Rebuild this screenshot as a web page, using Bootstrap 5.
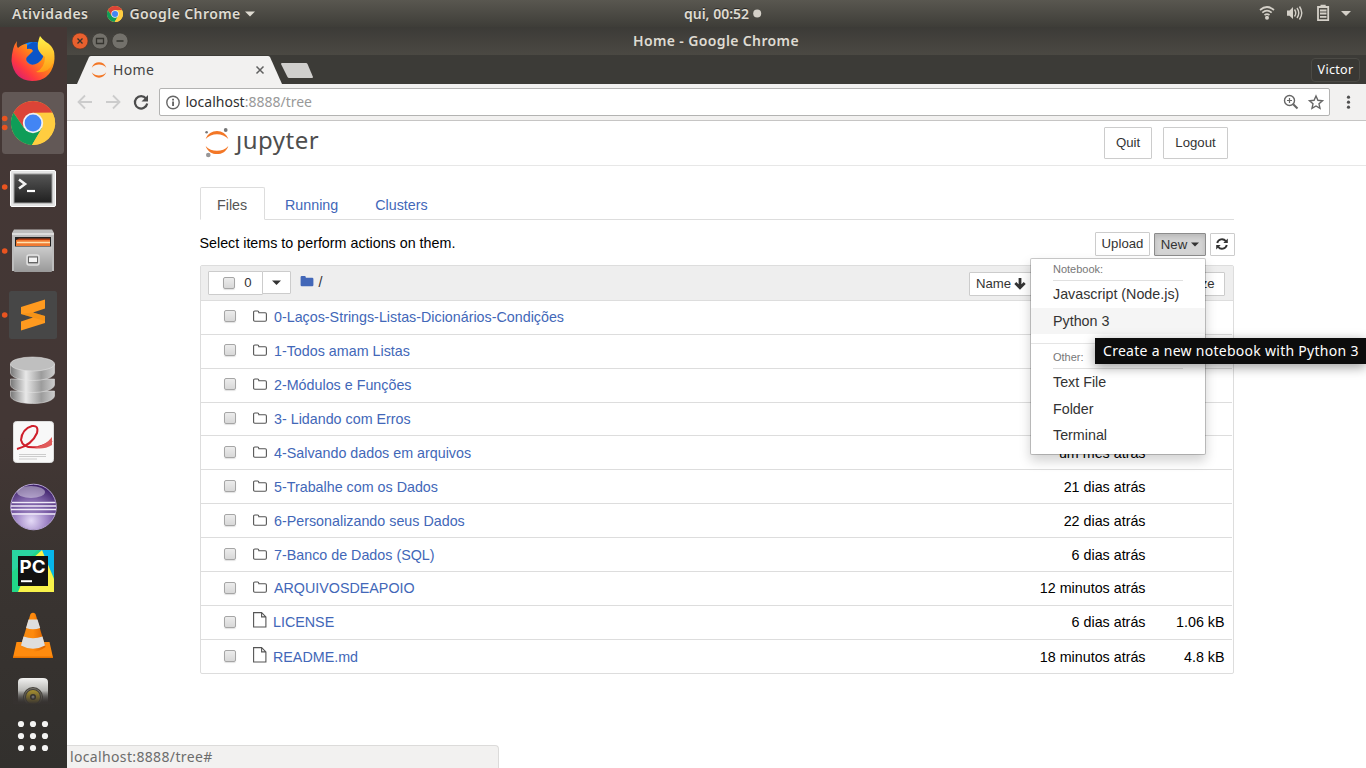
<!DOCTYPE html>
<html lang="pt-BR">
<head>
<meta charset="utf-8">
<title>Home</title>
<link href="https://cdn.jsdelivr.net/npm/bootstrap@5.3.0/dist/css/bootstrap.min.css" rel="stylesheet">
<style>
body{width:1366px;height:768px;overflow:hidden;font:14.3px/20px "Liberation Sans",sans-serif;color:#000;background:#fff}
svg{display:block;flex:none}
.ubu{font-family:"Noto Sans","Open Sans",sans-serif;white-space:nowrap}
.panel{height:27px;background:linear-gradient(#595750,#3e3d38);color:#dfdbd2;font-size:14px;font-weight:600;text-shadow:0 -1px 0 #2c2b28}
.panel>*{flex:1 1 0}
.t-act{letter-spacing:.5px}
.t-chr{letter-spacing:.4px}
.t-ttl{letter-spacing:.37px}
.t-usr{letter-spacing:.3px}
.t-tip{letter-spacing:.28px}
.t-sta{letter-spacing:.35px}
.clock{flex:none;padding-left:68px}
.dock{width:67px;background:linear-gradient(#443735,#433735 55%,#3a3431 72%,#32302d);flex:none}
.titlebar{height:28px;background:linear-gradient(#3c3b37,#4b4943);color:#dfdbd2;font-size:14px;font-weight:600;padding-left:5px}
.titletext{padding-left:503px}
.tabstrip{height:29px;background:#3c3b37}
.userbtn{width:49px;height:24px;border:1px solid #4b4a45;border-radius:4px;color:#fff;font-size:12.5px;background:#393834;margin:3px 6px 0 0}
.toolbar{height:37px;background:#f2f1f0;border-bottom:1px solid #c6c5c4;padding-left:10px}
.address{width:1171px;height:28px;border:1px solid #b3b3b2;border-radius:2px;background:#fff;font-size:14px;color:#999;padding:0 4px 0 6px}
.address b{font-weight:400;color:#303030}
.wrap{width:1034px;margin-left:133px}
.jhead{height:45px;border-bottom:1px solid #e7e7e7}
.jlogo{font-size:24px;line-height:30px;color:#4e4e4e;letter-spacing:.5px;margin:4px 0 0 4px}
.stem{display:inline-block;clip-path:inset(9.5px -3px -3px -6px)}
.btn-j{border:1px solid #ccc;border-radius:1px;background:#fff;color:#333;font-size:13.2px;line-height:1;padding:0;display:flex;align-items:center;justify-content:center}
.btn-j.dropdown-toggle::after{content:none}
.btn-new{background:#d4d4d4;border-color:#8c8c8c;box-shadow:inset 0 3px 5px rgba(0,0,0,.125)}
.jtabs{border-bottom:1px solid #ddd;height:33px;--bs-nav-tabs-border-width:1px}
.jtabs .nav-link{height:33px;padding:0 16px;border-radius:2px 2px 0 0;color:#4267b8;line-height:35px;border:1px solid transparent;margin-bottom:-1px}
.jtabs .nav-link.active{border-color:#ddd #ddd #fff;color:#555;width:65px}
.filebox{border:1px solid #ddd;border-radius:2px}
.filehead{height:34.85px;background:#eee;border-bottom:1px solid #ddd}
.filerow{height:33.9px;flex:none;border:0;border-bottom:1px solid #ddd;padding:0 7.5px 0 23px;margin-right:1px;background:transparent;color:#000}
.filerow:last-child{border-bottom-color:transparent}
.filerow a{color:#4267b8;text-decoration:none}
.cbx{width:12px;height:12px;border:1px solid #a6a6a6;border-radius:2px;background:linear-gradient(#ececec,#d8d8d8);box-shadow:0 1px 1px rgba(0,0,0,.12);flex:none}
.filerow .cbx{margin-bottom:1.6px}
.fsize{width:79px;text-align:right}
.newmenu{display:block;position:absolute;left:963px;top:137px;width:176px;height:197px;min-width:0;padding:0;border:1px solid rgba(0,0,0,.2);border-radius:2px;background:#fff;background-clip:padding-box;box-shadow:0 6px 12px rgba(0,0,0,.175);font-size:14.3px;z-index:5}
.newmenu .dropdown-header{font-size:11px;line-height:20px;height:22px;padding:0;margin:0 22px;color:#777;border-bottom:1px solid #e0e0e0}
.newmenu .dropdown-item{height:26.6px;line-height:26.4px;padding:0 0 0 22px;color:#333}
.newmenu .hov{background:#f5f5f5}
.rule{border-top:1px solid #e5e5e5;margin:9px 0 3px}
.tip{position:absolute;left:1028px;top:217px;width:271px;height:26px;background:#0c0c0c;color:#fff;font-size:14px;line-height:26px;box-shadow:0 3px 12px rgba(0,0,0,.4);z-index:6;padding-left:8px}
.status{position:absolute;left:0;bottom:0;width:432px;height:23px;background:#f2f1f0;border:1px solid #dcdbda;border-width:1px 1px 0 0;border-radius:0 4px 0 0;color:#6c6c6c;font-size:14px;line-height:22px;padding-left:3px}
</style>
</head>
<body class="d-flex flex-column">
<svg width="0" height="0" class="position-absolute">
<defs>
<g id="chrome"><circle r="22" fill="#fc4"/><path d="M-19.5-10.3A22 22 0 0 1 19.5-10.3L0-10-9 5z" fill="#db4437"/><path d="M-19.5-10.3A22 22 0 0 0-1 22L9 5-9 5z" fill="#0f9d58"/><path d="M19.5-10.3H0L9 5-1 22A22 22 0 0 0 19.5-10.3z" fill="#ffcd40"/><circle r="10.2" fill="#f1f1f1"/><circle r="8.4" fill="#4285f4"/></g>
<path id="folder" d="M.6 2.2Q.6 1 1.8 1H4.6Q5.8 1 5.8 2.2V2.7H12.2Q13.4 2.7 13.4 3.9V10Q13.4 11.2 12.2 11.2H1.8Q.6 11.2.6 10z"/>
<path id="file" d="M.6.6H8.6L12.9 4.9V15H.6zM8.6.6V4.9H12.9"/>
<g id="ring" fill="#f37726"><path d="M-11-2.6C-7.6-11 7.6-11 11-2.6C5.5-7.6-5.5-7.6-11-2.6z"/><path d="M-11 2.6C-7.6 11 7.6 11 11 2.6C5.5 7.6-5.5 7.6-11 2.6z"/></g>
<linearGradient id="met" x2="1" y2="0"><stop offset="0" stop-color="#777"/><stop offset=".35" stop-color="#e8e8e8"/><stop offset=".7" stop-color="#9c9c9c"/><stop offset="1" stop-color="#ccc"/></linearGradient>
<linearGradient id="grey" x2="0" y2="1"><stop offset="0" stop-color="#ccc"/><stop offset="1" stop-color="#999"/></linearGradient>
<linearGradient id="scr" x2="0" y2="1"><stop offset="0" stop-color="#565656"/><stop offset="1" stop-color="#1f1f1f"/></linearGradient>
<linearGradient id="fx" x1="1" y1="0" x2="0" y2="1"><stop offset="0" stop-color="#ffdf2b"/><stop offset=".4" stop-color="#ff8a16"/><stop offset=".7" stop-color="#ff3a3f"/><stop offset="1" stop-color="#c8108c"/></linearGradient>
<linearGradient id="fy" x2="0" y2="1"><stop offset="0" stop-color="#fff44a"/><stop offset="1" stop-color="#ff9a14"/></linearGradient>
<radialGradient id="ecl" cx=".45" cy=".8" r=".8"><stop offset="0" stop-color="#e4daf6"/><stop offset=".45" stop-color="#9c82c4"/><stop offset="1" stop-color="#3a1d66"/></radialGradient>
<linearGradient id="spk" x2="0" y2="1"><stop offset="0" stop-color="#f2f2f0"/><stop offset=".5" stop-color="#b9b9b6"/><stop offset="1" stop-color="#333230"/></linearGradient>
<linearGradient id="fade" x2="0" y2="1"><stop offset="0" stop-color="#363230" stop-opacity="0"/><stop offset="1" stop-color="#363230"/></linearGradient>
<linearGradient id="cone" x2="1" y2="0"><stop offset="0" stop-color="#f08a16"/><stop offset=".5" stop-color="#ff8a0c"/><stop offset="1" stop-color="#d65f00"/></linearGradient>
</defs></svg>

<header class="panel ubu d-flex align-items-center">
<div class="d-flex align-items-center" style="padding-left:12px"><span class="t-act">Atividades</span>
<svg width="16" height="16" viewBox="-22 -22 44 44" style="margin-left:19px;margin-right:6px"><use href="#chrome"/></svg><span class="t-chr">Google Chrome</span>
<svg width="10" height="6" style="margin-left:4px"><path d="M0 .5H10L5 5.5z" fill="#dfdbd2"/></svg></div>
<div class="clock d-flex align-items-center justify-content-center"><span>qui, 00:52</span><svg width="9" height="9" style="margin-left:4px"><circle cx="4.2" cy="4.500" r="4" fill="#d4d0c8"/></svg></div>
<div class="d-flex justify-content-end"><svg width="108" height="27" viewBox="1258 0 108 27"><g fill="none" stroke="#d4d0c8" stroke-width="1.7"><path d="M1260 10Q1267 4 1274 10M1262.3 12.7Q1267 8.6 1271.7 12.7M1264.5 15.2Q1267 13 1269.5 15.2"/><path d="M1294.500 9.500Q1297 13 1294.500 16.500M1297 8Q1300.500 13 1297 18M1299.500 6.500Q1304 13 1299.500 19.500" stroke-width="1.4"/><path d="M1318 7H1328.200V20.200H1318zM1320 10.500H1326.500M1320 13.500H1326.500M1320 16.800H1326.500" stroke-width="1.8"/></g><g fill="#d4d0c8"><circle cx="1267" cy="17.800" r="2"/><path d="M1287 10.500H1289.500L1293 7V19L1289.500 15.700H1287zM1320.500 4.700H1325.700V7H1320.500zM1341 11H1351L1346 16z"/></g></svg></div>
</header>

<div class="d-flex flex-grow-1">
<nav class="dock d-flex flex-column">
<svg width="67" height="64"><circle cx="33" cy="33" r="18" fill="#0a84ff"/><path d="M33 15Q44 16 47 27L34 40L22 30Q22 20 33 15z" fill="#0b55c8"/><path d="M17 14Q16 19 18 21Q22 17 27 17L27 22Q32 21 33 24L28 29Q25 31 27 35Q31 40 38 36Q46 31 42 23L50 20Q56 28 54 36Q50 54 32 54Q14 53 11.500 34Q12 20 17 14z" fill="url(#fx)"/><path d="M40 9Q37 16 38 22Q40 27 45 30Q45 41 36 45Q48 47 53 36Q58 22 46 15Q42 12 40 9z" fill="url(#fy)"/></svg>
<svg width="67" height="64"><rect x="2" y="1" width="62" height="62" rx="3.500" fill="#625856"/><use href="#chrome" x="33" y="32"/><circle cx="4.700" cy="27.500" r="2.800" fill="#e95420"/><circle cx="4.700" cy="36.500" r="2.800" fill="#e95420"/></svg>
<svg width="67" height="64"><circle cx="4.700" cy="32" r="2.800" fill="#e95420"/><rect x="10.500" y="15.500" width="45" height="36" rx="1.500" fill="#e4e4e4" stroke="#fff"/><rect x="14" y="19" width="38" height="29" fill="url(#scr)" stroke="#999"/><path d="M19 24.500L25 29L19 33.500" fill="none" stroke="#f2f2f2" stroke-width="2.600"/><path d="M27 36H35" stroke="#fff" stroke-width="2.200"/></svg>
<svg width="67" height="64"><circle cx="4.700" cy="32" r="2.800" fill="#e95420"/><path d="M14 10.500H52L54 14V52H12V14z" fill="#bdbdbd"/><path d="M12 14H54V16H12z" fill="#dcdcdc"/><path d="M15 18H51V28H15z" fill="#222"/><path d="M19 19.500H50V21H16z" fill="#b23c10"/><path d="M16 21H50V27H16z" fill="#f07a32"/><path d="M17 23.500H50" stroke="#ffe2b0" stroke-width="1.300"/><rect x="14" y="27.500" width="38" height="25.500" rx="1" fill="url(#grey)"/><rect x="27" y="36" width="12" height="10" rx="2" fill="none" stroke="#e2e2e2" stroke-width="1.500"/><rect x="28.500" y="38" width="9" height="5.500" fill="#f4f4f4" stroke="#666"/></svg>
<svg width="67" height="64"><circle cx="4.700" cy="32" r="2.800" fill="#e95420"/><rect x="9" y="8" width="48" height="48" rx="2.500" fill="#474747"/><path d="M21 24L45 16.500V25.500L33 29.500L45 33V40L21 47.500V38.500L33 34.500L21 31z" fill="#ff9a1f"/><path d="M21 31L33 34.500L45 38V33L33 29.500z" fill="#e98b10" opacity=".45"/></svg>
<svg width="67" height="64"><g stroke="#e6e6e6" stroke-opacity=".55" stroke-width="1"><path d="M10.500 44V49C12 59 53 59 54.500 49V44z" fill="url(#met)"/><path d="M10.500 32V38C12 48 53 48 54.500 38V32z" fill="url(#met)"/><path d="M10.500 17V26C12 36 53 36 54.500 26V17z" fill="url(#met)"/><ellipse cx="32.500" cy="17" rx="22" ry="7" fill="#bfbfbf"/></g></svg>
<svg width="67" height="64"><rect x="13.500" y="10.500" width="40" height="41" rx="3" fill="#f8f8f8" stroke="#ddd"/><path d="M17 38Q32 34 37 22Q39 14 32 15Q22 18 21 29Q23 38 38 36Q47 33 52 30" fill="none" stroke="#cf1f2b" stroke-width="2"/><path d="M34 37Q46 34 52 26V34Q44 39 34 37z" fill="#e15a5a"/><path d="M19 43.500H46M19 45.500H46M19 48H37" stroke="#ccc"/></svg>
<svg width="67" height="64"><circle cx="33.500" cy="32" r="22.800" fill="url(#ecl)" stroke="#b5a3d4"/><ellipse cx="31" cy="17" rx="14" ry="6" fill="#fff" opacity=".4"/><path d="M12 26H56V38H12z" fill="#5d3d8c" opacity=".45"/><path d="M12 27.500H55.500M11 31H56M11 34.500H56M12 39H55" stroke="#efeaf8" stroke-width="1.300"/></svg>
<svg width="67" height="64"><path d="M12 11H54V53H12z" fill="#21d789"/><path d="M39 11H54V38z" fill="#07b6ea"/><path d="M32 20L42 11L54 40V53H18z" fill="#f8f24a"/><path d="M12 11H38L12 33z" fill="#2ad4a0"/><rect x="18" y="17" width="30" height="30" fill="#111"/><path d="M21 42.200H32" stroke="#fff" stroke-width="2"/><text x="19.500" y="33.500" font-family="Inter,sans-serif" font-weight="700" font-size="17.500" textLength="26" lengthAdjust="spacingAndGlyphs" fill="#fff">PC</text></svg>
<svg width="67" height="64"><path d="M16.500 39H49.500L53 54.500H13z" fill="#ff8b0e"/><path d="M13 53.500H53V55H13z" fill="#e67300"/><path d="M30.500 11Q33 8.500 35.500 11L45.500 44Q33 53 20.500 44z" fill="url(#cone)"/><path d="M28.500 16.500H37.500L40.200 25Q33 27.500 26 25zM23.500 33.500Q33 37 42.500 33.500L45 42.500Q33 49 21 42.500z" fill="#dedede"/></svg>
<svg width="67" height="37"><path d="M18 36V15Q18 11 23 11H43Q48 11 48 15V36z" fill="url(#spk)"/><circle cx="33" cy="30" r="10" fill="#44423c"/><circle cx="33" cy="30" r="8.500" fill="none" stroke="#77746a"/><circle cx="33" cy="30" r="7" fill="#a08a30"/><circle cx="33" cy="30" r="3" fill="#35332f"/><circle cx="33" cy="30" r="1.500" fill="#999"/><path d="M13 24H53V37H13z" fill="url(#fade)"/></svg>
<svg width="67" height="64" fill="#f4f4f3"><circle cx="21" cy="20" r="3.100"/><circle cx="33" cy="20" r="3.100"/><circle cx="45" cy="20" r="3.100"/><circle cx="21" cy="32" r="3.100"/><circle cx="33" cy="32" r="3.100"/><circle cx="45" cy="32" r="3.100"/><circle cx="21" cy="44" r="3.100"/><circle cx="33" cy="44" r="3.100"/><circle cx="45" cy="44" r="3.100"/></svg>
</nav>

<div class="flex-grow-1 d-flex flex-column">
<div class="titlebar ubu d-flex align-items-center">
<svg width="58" height="20" viewBox="72 31 58 20"><circle cx="80" cy="41" r="8" fill="#e9602e" stroke="#5a3323" stroke-width=".6"/><g fill="#73716b" stroke="#35342f" stroke-width=".6"><circle cx="100" cy="41" r="8"/><circle cx="120" cy="41" r="8"/></g><path d="M77.500 38.500L82.500 43.500M82.500 38.500L77.500 43.500M96.500 38.500H103.500V43.500H96.500zM116.500 41H123.500" fill="none" stroke="#35342f" stroke-width="1.300"/></svg>
<span class="titletext t-ttl">Home - Google Chrome</span></div>

<div class="tabstrip d-flex">
<svg width="250" height="29" viewBox="67 55 250 29"><path d="M77 84L89 57Q90 56 91 56H268Q269 56 270 57L282 84z" fill="#f2f1f0"/><use href="#ring" transform="translate(99 70) scale(.66 .86)"/><text x="113" y="75" font-family="Noto Sans,sans-serif" font-size="14" textLength="41" fill="#444">Home</text><path d="M256.500 66.500L263.500 73.500M263.500 66.500L256.500 73.500" stroke="#606060" stroke-width="1.500"/><path d="M282 63H306Q307 63 307.500 64L313 77Q313 78 312 78H289Q288 78 287.500 77L281 64Q281 63 282 63z" fill="#d0cfcd"/></svg>
<span class="userbtn ubu d-flex align-items-center justify-content-center ms-auto"><span class="t-usr">Victor</span></span></div>

<div class="toolbar d-flex align-items-center">
<svg width="82" height="30" viewBox="77 87 82 30" fill="none"><path d="M92 102H79M85 95.500L78.500 102L85 108.500M106 102H119M113 95.500L119.500 102L113 108.500" stroke="#ccc" stroke-width="1.800"/><path d="M146 98.500A6.200 6.200 0 1 0 147.200 103.500" stroke="#4c4c4c" stroke-width="2.200"/><path d="M148 95V101.500H141.500z" fill="#4c4c4c"/></svg>
<div class="address ubu d-flex align-items-center">
<svg width="15" height="15" style="margin-right:4.500px"><circle cx="7" cy="7.500" r="6.200" fill="none" stroke="#666" stroke-width="1.400"/><path d="M6.200 6.500H7.900V11H6.200zM6.200 3.800H7.900V5.400H6.200z" fill="#555"/></svg>
<span><b>localhost</b>:8888/tree</span>
<svg class="ms-auto" width="42" height="18" viewBox="1283 93 42 18" fill="none" stroke="#666" stroke-width="1.400"><circle cx="1289.500" cy="100.500" r="5"/><path d="M1293.200 104.200L1297.500 108.500" stroke-width="2"/><path d="M1287 100.500H1292M1289.500 98V103" stroke-width="1.200"/><path d="M1316 96L1317.900 100.300L1322.500 100.700L1319 103.800L1320 108.300L1316 106L1312 108.300L1313 103.800L1309.500 100.700L1314.100 100.300z"/></svg></div>
<svg width="30" height="20" style="margin-left:4px"><g fill="#505050"><circle cx="14.500" cy="5.200" r="1.600"/><circle cx="14.500" cy="10.200" r="1.600"/><circle cx="14.500" cy="15.200" r="1.600"/></g></svg></div>

<main class="flex-grow-1 position-relative">
<div class="jhead"><div class="wrap d-flex">
<svg width="32" height="40" viewBox="200 121 32 40"><use href="#ring" transform="translate(217 142.500) scale(1.030 1.300)"/><g fill="#767677"><circle cx="225.700" cy="130" r="1.900"/><circle cx="206.600" cy="132.300" r="1.300"/><circle cx="208.300" cy="155" r="2.300" fill="#989798"/></g></svg>
<span class="jlogo ubu"><span class="stem">j</span>upyter</span>
<button class="btn btn-j ms-auto" style="width:48px;height:32px;margin-top:6px">Quit</button>
<button class="btn btn-j" style="width:65px;height:32px;margin:6px 6px 0 11px">Logout</button></div></div>

<div class="wrap" style="padding-top:21px">
<ul class="nav nav-tabs jtabs">
<li class="nav-item"><a class="nav-link active" href="#">Files</a></li>
<li class="nav-item" style="margin-left:3px"><a class="nav-link" href="#">Running</a></li>
<li class="nav-item" style="margin-left:3px"><a class="nav-link" href="#">Clusters</a></li></ul>

<div class="d-flex align-items-start" style="height:45px;padding-top:12px;margin-right:-1px">
<span style="margin:1px auto 0 -.5px">Select items to perform actions on them.</span>
<button class="btn btn-j" style="width:55px;height:24px">Upload</button>
<button class="btn btn-j btn-new dropdown-toggle" style="width:52px;height:23px;margin:1px 4px 0">New<svg width="8" height="5" style="margin-left:4px"><path d="M0 .5H8L4 4.500z" fill="#333"/></svg></button>
<button class="btn btn-j" style="width:25px;height:23px;margin-top:1px;padding:0 1px 1px 0"><svg width="12" height="12" viewBox="0 0 12 12" fill="none" stroke="#333" stroke-width="1.900"><path d="M1.200 5A4.900 4.900 0 0 1 9.800 3.200M10.800 7A4.900 4.900 0 0 1 2.200 8.800"/><path d="M11.800 .5V5H7.300zM.2 11.500V7H4.700z" fill="#333" stroke="none"/></svg></button></div>

<div class="filebox">
<div class="filehead d-flex align-items-start">
<div class="btn-j" style="width:55px;height:24px;margin:5px 0 0 7px;padding-left:4px"><i class="cbx"></i><span style="margin-left:9px">0</span></div>
<div class="btn-j" style="width:29px;height:23px;margin:5px 9px 0 -1px"><svg width="9" height="5"><path d="M0 .5H9L4.500 5z" fill="#333"/></svg></div>
<svg width="14" height="12" fill="#4267b8" style="margin-top:9px"><use href="#folder"/></svg><span style="margin:6px 0 0 4.500px;color:#333">/</span>
<div class="btn-j justify-content-start ms-auto" style="width:66px;height:24px;margin:6px 122px 0 0;padding-left:6px">Name<svg width="12" height="12" style="margin-left:3px"><path d="M6 0V9M1.300 5L6 9.800L10.700 5" fill="none" stroke="#333" stroke-width="2.800"/></svg></div>
<div class="btn-j" style="width:68px;height:24px;margin:6px 8px 0 0;padding-right:1px">File size</div></div>
<div id="rows" class="list-group list-group-flush" style="height:372.15px"></div></div></div>

<div class="dropdown-menu newmenu show">
<h6 class="dropdown-header">Notebook:</h6>
<a class="dropdown-item" href="#">Javascript (Node.js)</a>
<a class="dropdown-item hov" href="#">Python 3</a>
<div class="rule"></div>
<h6 class="dropdown-header">Other:</h6>
<a class="dropdown-item" href="#">Text File</a>
<a class="dropdown-item" href="#">Folder</a>
<a class="dropdown-item" href="#">Terminal</a></div>
<div class="tip ubu"><span class="t-tip">Create a new notebook with Python 3</span></div>
<div class="status ubu"><span class="t-sta">localhost:8888/tree#</span></div>
</main></div></div>
<script>
const rows=[["0-Laços-Strings-Listas-Dicionários-Condições"],["1-Todos amam Listas"],["2-Módulos e Funções"],["3- Lidando com Erros"],["4-Salvando dados em arquivos","um mês atrás"],["5-Trabalhe com os Dados","21 dias atrás"],["6-Personalizando seus Dados","22 dias atrás"],["7-Banco de Dados (SQL)","6 dias atrás"],["ARQUIVOSDEAPOIO","12 minutos atrás"],["LICENSE","6 dias atrás","1.06 kB"],["README.md","18 minutos atrás","4.8 kB"]];
document.getElementById("rows").innerHTML=rows.map(([n,t="",s=""])=>`<div class="list-group-item filerow d-flex align-items-center"><i class="cbx"></i>${s?'<svg width="14" height="16" style="margin:-4px 6px 0 17px" fill="none" stroke="#555" stroke-width="1.1"><use href="#file"/></svg>':'<svg width="15" height="12" style="margin:-2px 6px 0 17px" fill="none" stroke="#555" stroke-width="1.1"><use href="#folder"/></svg>'}<a href="#">${n}</a><span class="ms-auto">${t}</span><span class="fsize">${s}</span></div>`).join("");
</script>
<script src="https://cdn.jsdelivr.net/npm/bootstrap@5.3.0/dist/js/bootstrap.bundle.min.js"></script>
</body>
</html>
